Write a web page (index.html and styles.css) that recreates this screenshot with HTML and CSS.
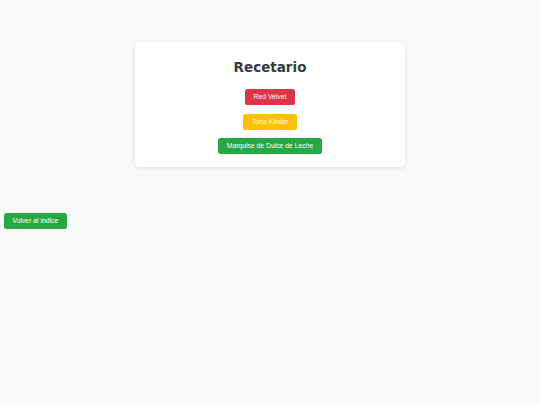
FILE: index.html
```html
<!DOCTYPE html>
<html lang="es">
<head>
<meta charset="utf-8">
<title>Recetario</title>
<link rel="stylesheet" href="styles.css">
</head>
<body>
<div class="card">
  <h1 class="title">Recetario</h1>
  <div class="list">
    <a class="btn btn-red" href="#">Red Velvet</a>
    <a class="btn btn-yellow" href="#">Torta Kinder</a>
    <a class="btn btn-green" href="#">Marquise de Dulce de Leche</a>
  </div>
</div>
<div class="back">
  <a class="btn btn-green" href="#">Volver al indice</a>
</div>
</body>
</html>
```
FILE: styles.css
```css
html, body {
  background: #f8f9fa;
}
body {
  margin: 4px;
  font-family: "DejaVu Sans", Verdana, sans-serif;
}
.card {
  width: 270px;
  box-sizing: border-box;
  margin: 38px auto 0;
  background: #ffffff;
  border-radius: 5px;
  box-shadow: 0 1px 5px rgba(0, 0, 0, 0.1);
  padding: 17px 10px 13px;
  display: flex;
  flex-direction: column;
  align-items: center;
}
.title {
  margin: 0;
  font-size: 13.5px;
  line-height: 17px;
  font-weight: bold;
  color: #343a40;
}
.list {
  margin-top: 13px;
  display: flex;
  flex-direction: column;
  align-items: center;
  gap: 8.5px;
}
.btn {
  display: inline-block;
  font-family: "Liberation Sans", Arial, sans-serif;
  font-size: 6.8px;
  line-height: 8px;
  padding: 4px 8.5px;
  border-radius: 2.5px;
  color: #ffffff;
  text-decoration: none;
}
.btn-red { background: #dc3545; }
.btn-yellow { background: #ffc107; }
.btn-green { background: #28a745; }
.back {
  margin-top: 41px;
}
```
